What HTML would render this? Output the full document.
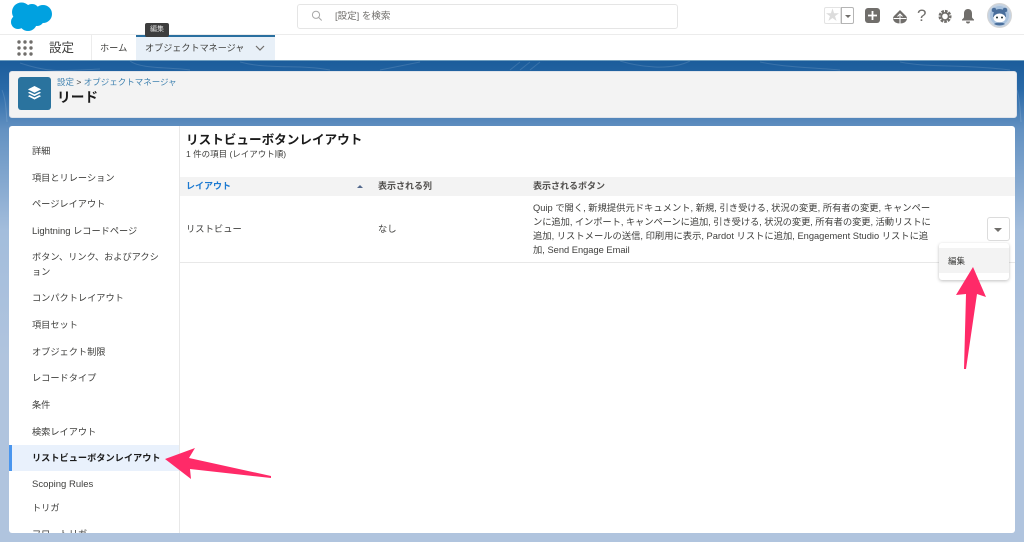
<!DOCTYPE html>
<html lang="ja"><head><meta charset="utf-8"><title>設定</title>
<style>
html,body{margin:0;padding:0}
body{width:1024px;height:542px;position:relative;overflow:hidden;background:#fff;font-family:"Liberation Sans","Noto Sans CJK JP",sans-serif;color:#3e3e3c;font-size:9.2px;filter:blur(.3px)}
.a{position:absolute;white-space:nowrap}
.nav{left:32px;font-size:9.2px;line-height:14px;color:#3e3e3c}
.l{font-size:9.5px}
</style></head><body>
<div class="a" style="left:0;top:60px;width:1024px;height:482px;background:linear-gradient(#1b5c9b 0,#2a6aa8 30px,#6492c2 70px,#a3bddc 170px,#b0c4de 300px)"></div>
<svg class="a" style="left:0;top:60px" width="1024" height="72" fill="none" stroke="#fff" stroke-opacity=".13" stroke-width="1"><path d="M20 3c30 10 40 8 80 6M130 1c10 8 40 6 60 9M240 2c30 8 60 2 90 8M420 2c-20 4-30 6-40 8M520 2l-10 8M530 2l-10 8M540 2l-10 8M620 1c20 6 50 10 70 0M760 2c30 6 60 6 80 8M900 2c30 6 60 2 110 8M60 120c20-5 60-5 90 0M300 120c30-5 60-4 90 0M560 120c30-6 60-4 80 0M800 120c30-5 60-4 90 0M2 30c4 10 4 20 5 32M1017 30c3 10 3 20 4 32"/></svg>
<div class="a" style="left:0;top:60px;width:1024px;height:1px;background:#6f9ebf"></div>

<!-- top bar -->
<svg class="a" style="left:0;top:0" width="60" height="34" fill="#00a1e0"><circle cx="21.500" cy="12" r="9.500"/><circle cx="43" cy="14" r="9"/><circle cx="32" cy="11.500" r="7.500"/><circle cx="18" cy="22" r="7"/><circle cx="28" cy="22" r="9"/><circle cx="37" cy="19" r="7"/><rect x="20" y="8" width="20" height="14"/></svg>
<div class="a" style="left:297px;top:4px;width:379px;height:23px;border:1px solid #e5e5e5;border-radius:3px;background:#fff"></div>
<svg class="a" style="left:311px;top:10px" width="12" height="12" viewBox="0 0 12 12" fill="none" stroke="#a8a8a8" stroke-width="1"><circle cx="5" cy="4.800" r="3.600"/><path d="M7.700 7.500l3 3"/></svg>
<div class="a" style="left:335px;top:10px;font-size:9.500px;line-height:13px;color:#706e6b">[設定] を検索</div>

<div class="a" style="left:824px;top:7px;width:17px;height:17px;border:1px solid #e3e3e3;border-radius:2px 0 0 2px;box-sizing:border-box;color:#dcdcdc;font-size:14px;line-height:15px;text-align:center">★</div>
<div class="a" style="left:841px;top:7px;width:13px;height:17px;border:1px solid #b5b5b5;border-radius:0 2px 2px 0;box-sizing:border-box"></div>
<div class="a" style="left:845px;top:15px;width:0;height:0;border:3px solid transparent;border-top:3px solid #706e6b;border-bottom:0"></div>
<svg class="a" style="left:865px;top:8px" width="15" height="15" viewBox="0 0 15 15"><rect width="15" height="15" rx="3" fill="#706e6b"/><path d="M7.500 3v9M3 7.500h9" stroke="#fff" stroke-width="1.800"/></svg>
<svg class="a" style="left:893px;top:10px" width="14" height="14" viewBox="0 0 14 14"><path fill="#706e6b" d="M7 0l5.500 5.500c1.300 1.200 1.800 2.600 1.300 4-.6 2.500-3.300 4-6.800 4S.8 12 .2 9.500c-.5-1.400 0-2.800 1.300-4z"/><path d="M.5 8.500h13M7 4.500v9M4.500 6.500L7 4l2.500 2.500" stroke="#fff" stroke-width="1" fill="none"/></svg>
<div class="a" style="left:917px;top:6px;font-size:17px;line-height:19px;color:#706e6b">?</div>
<svg class="a" style="left:938px;top:9px" width="14" height="15" viewBox="0 0 14 15"><path fill="none" stroke="#706e6b" stroke-width="2.600" stroke-dasharray="2.600 1" d="M7 2.200a5 5 0 1 1 0 10.400a5 5 0 1 1 0-10.400z"/><circle cx="7" cy="7.400" r="3.600" fill="none" stroke="#706e6b" stroke-width="1.600"/></svg>
<svg class="a" style="left:961px;top:8px" width="14" height="16" viewBox="0 0 14 16"><path fill="#706e6b" d="M7 1c2.700 0 4 2 4 4.500V9c0 1 1.200 1.800 2 2.500v1H1v-1C1.800 10.800 3 10 3 9V5.500C3 3 4.300 1 7 1z"/><path fill="#706e6b" d="M5 13.500h4a2 2 0 0 1-4 0z"/></svg>
<svg class="a" style="left:987px;top:3px" width="25" height="25" viewBox="0 0 25 25"><circle cx="12.500" cy="12.500" r="12" fill="#c5d3e3" stroke="#d5d5d5"/><circle cx="12.500" cy="12.500" r="9.500" fill="#a9c2dd"/><circle cx="7" cy="7" r="2.300" fill="#4a6f9c"/><circle cx="18" cy="7" r="2.300" fill="#4a6f9c"/><path d="M6 14c0-5 2.500-8 6.500-8s6.500 3 6.500 8z" fill="#4a6f9c"/><ellipse cx="12.500" cy="15" rx="6" ry="4.500" fill="#fff"/><circle cx="10" cy="14.500" r="1" fill="#233"/><circle cx="15" cy="14.500" r="1" fill="#233"/><path d="M7 21c2-2 9-2 11 0-3 2-8 2-11 0z" fill="#4a6f9c"/></svg>
<div class="a" style="left:0;top:34px;width:1024px;height:1px;background:#ececec"></div>

<!-- app nav -->
<svg class="a" style="left:17px;top:40px" width="16" height="16" fill="#706e6b"><circle cx="2" cy="2" r="1.700"/><circle cx="8" cy="2" r="1.700"/><circle cx="14" cy="2" r="1.700"/><circle cx="2" cy="8" r="1.700"/><circle cx="8" cy="8" r="1.700"/><circle cx="14" cy="8" r="1.700"/><circle cx="2" cy="14" r="1.700"/><circle cx="8" cy="14" r="1.700"/><circle cx="14" cy="14" r="1.700"/></svg>
<div class="a" style="left:49px;top:39px;font-size:12.500px;line-height:18px;color:#3e3e3c">設定</div>
<div class="a" style="left:91px;top:35px;width:1px;height:25px;background:#ececec"></div>
<div class="a" style="left:100px;top:41px;font-size:9.200px;line-height:14px;color:#3e3e3c">ホーム</div>
<div class="a" style="left:136px;top:35px;width:139px;height:25px;background:#e8f0f8;border-top:2px solid #2a6f9f;box-sizing:border-box"></div>
<div class="a" style="left:145px;top:41px;font-size:9.100px;line-height:14px;color:#3e3e3c">オブジェクトマネージャ</div>
<svg class="a" style="left:255px;top:45px" width="10" height="7" fill="none" stroke="#706e6b" stroke-width="1.200"><path d="M1 1l4 4 4-4"/></svg>
<div class="a" style="left:145px;top:23px;width:24px;height:14px;background:#3d3d3d;border-radius:2px;color:#ddd;font-size:7px;line-height:14px;text-align:center">編集</div>

<!-- page header -->
<div class="a" style="left:9px;top:71px;width:1006px;height:45px;background:#f3f3f3;border:1px solid #dfe3ea;border-radius:3px"></div>
<div class="a" style="left:18px;top:77px;width:33px;height:33px;background:#2a739e;border-radius:3px"></div>
<svg class="a" style="left:27px;top:86px" width="15" height="15" viewBox="0 0 17 17" fill="#fff"><path d="M8.500 0l7.500 3.800-7.500 3.800L1 3.800z"/><path d="M3 6.600l5.500 2.700 5.500-2.700 2 1.100-7.500 3.800L1 7.700z"/><path d="M3 10.400l5.500 2.700 5.500-2.700 2 1.100-7.500 3.800L1 11.500z"/></svg>
<div class="a" style="left:57px;top:76px;font-size:8.500px;line-height:13px;color:#3f82b0">設定 <span style="color:#3e3e3c">&gt;</span> オブジェクトマネージャ</div>
<div class="a" style="left:57px;top:88px;font-size:13.700px;line-height:20px;font-weight:700;color:#1b1b1b">リード</div>

<!-- main card -->
<div class="a" style="left:9px;top:126px;width:1006px;height:407px;background:#fff;border-radius:3px;overflow:hidden">
  <div class="a" style="left:170px;top:0;width:1px;height:407px;background:#e8e8e8"></div>
  <div class="a" style="left:0;top:319px;width:170px;height:26px;background:#e9f1fc"></div>
  <div class="a" style="left:0;top:319px;width:3px;height:26px;background:#4a96ee"></div>
</div>
<div class="a nav" style="top:144px">詳細</div>
<div class="a nav" style="top:171px">項目とリレーション</div>
<div class="a nav" style="top:197px">ページレイアウト</div>
<div class="a nav" style="top:224px"><span class="l">Lightning</span> レコードページ</div>
<div class="a nav" style="top:250px;line-height:15px;white-space:normal;width:132px">ボタン、リンク、およびアクション</div>
<div class="a nav" style="top:291px">コンパクトレイアウト</div>
<div class="a nav" style="top:318px">項目セット</div>
<div class="a nav" style="top:345px">オブジェクト制限</div>
<div class="a nav" style="top:371px">レコードタイプ</div>
<div class="a nav" style="top:398px">条件</div>
<div class="a nav" style="top:425px">検索レイアウト</div>
<div class="a nav" style="top:451px;font-weight:700;color:#1b1b1b">リストビューボタンレイアウト</div>
<div class="a nav" style="top:477px"><span class="l">Scoping Rules</span></div>
<div class="a nav" style="top:501px">トリガ</div>
<div class="a nav" style="top:527px;height:6px;overflow:hidden">フロートリガ</div>

<!-- content -->
<div class="a" style="left:186px;top:131px;font-size:12.600px;line-height:19px;font-weight:700;color:#1b1b1b">リストビューボタンレイアウト</div>
<div class="a" style="left:186px;top:148px;font-size:8.500px;line-height:13px;color:#3e3e3c">1 件の項目 (レイアウト順)</div>
<div class="a" style="left:180px;top:177px;width:835px;height:19px;background:#f3f3f3"></div>
<div class="a" style="left:186px;top:179px;font-size:9px;line-height:14px;font-weight:700;color:#1b79d1">レイアウト</div>
<div class="a" style="left:357px;top:185px;width:0;height:0;border:3px solid transparent;border-bottom:3px solid #54698d;border-top:0"></div>
<div class="a" style="left:378px;top:179px;font-size:9px;line-height:14px;font-weight:700;color:#514f4d">表示される列</div>
<div class="a" style="left:533px;top:179px;font-size:9px;line-height:14px;font-weight:700;color:#514f4d">表示されるボタン</div>
<div class="a" style="left:186px;top:222px;font-size:9.300px;line-height:14px">リストビュー</div>
<div class="a" style="left:378px;top:222px;font-size:9.300px;line-height:14px">なし</div>
<div class="a" style="left:533px;top:201px;font-size:9.300px;line-height:14px">Quip で開く, 新規提供元ドキュメント, 新規, 引き受ける, 状況の変更, 所有者の変更, キャンペー<br><span style="letter-spacing:-.09px">ンに追加, インポート, キャンペーンに追加, 引き受ける, 状況の変更, 所有者の変更, 活動リストに</span><br>追加, リストメールの送信, 印刷用に表示, Pardot リストに追加, Engagement Studio リストに追<br>加, Send Engage Email</div>
<div class="a" style="left:180px;top:262px;width:835px;height:1px;background:#e8e8e8"></div>

<div class="a" style="left:987px;top:217px;width:23px;height:24px;background:#fff;border:1px solid #dcdcdc;border-radius:3px;box-sizing:border-box"></div>
<div class="a" style="left:994px;top:228px;width:0;height:0;border:4px solid transparent;border-top:4px solid #706e6b;border-bottom:0"></div>
<div class="a" style="left:939px;top:243px;width:70px;height:37px;background:#fff;border-radius:3px;box-shadow:0 1px 3px rgba(0,0,0,.25)"></div>
<div class="a" style="left:939px;top:248px;width:70px;height:25px;background:#f3f3f3"></div>
<div class="a" style="left:948px;top:255px;font-size:8.500px;line-height:13px;color:#3e3e3c">編集</div>

<!-- arrows -->
<svg class="a" style="left:0;top:0" width="1024" height="542"><path fill="#ff2a68" d="M973 267L986 297 977 294 966 369 964 369 966 294 956 295z"/><path fill="#ff2a68" d="M165 459L195 448 189 458 271 476 271 478 190 469 191 479z"/></svg>
</body></html>
